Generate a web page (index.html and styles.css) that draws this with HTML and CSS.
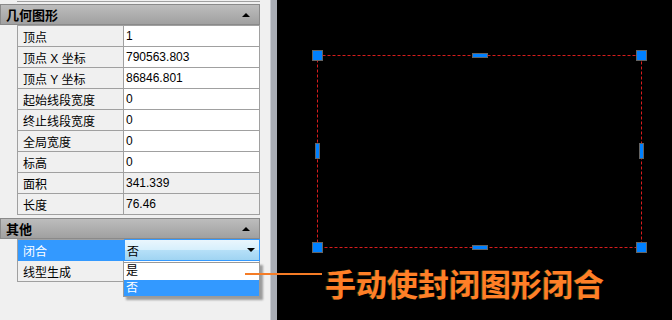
FILE: index.html
```html
<!DOCTYPE html>
<html>
<head>
  <meta charset="UTF-8">
  <link rel="stylesheet" href="styles.css">
  <title>特性</title>
</head>
<body>
  <div class="app">
    <div class="panel">
      <div class="prev-edge"></div>

      <div class="group">
        <div class="group-head"><span>几何图形</span><span class="tri-up"></span></div>
        <div class="props">
          <div class="row"><div class="key">顶点</div><div class="val">1</div></div>
          <div class="row"><div class="key">顶点 X 坐标</div><div class="val">790563.803</div></div>
          <div class="row"><div class="key">顶点 Y 坐标</div><div class="val">86846.801</div></div>
          <div class="row"><div class="key">起始线段宽度</div><div class="val">0</div></div>
          <div class="row"><div class="key">终止线段宽度</div><div class="val">0</div></div>
          <div class="row"><div class="key">全局宽度</div><div class="val">0</div></div>
          <div class="row"><div class="key">标高</div><div class="val">0</div></div>
          <div class="row"><div class="key">面积</div><div class="val readonly">341.339</div></div>
          <div class="row"><div class="key">长度</div><div class="val readonly">76.46</div></div>
        </div>
      </div>

      <div class="group group-other">
        <div class="group-head"><span>其他</span><span class="tri-up"></span></div>
        <div class="props">
          <div class="row selected">
            <div class="key">闭合</div>
            <div class="val combo"><span>否</span><span class="tri-down"></span></div>
          </div>
          <div class="row"><div class="key">线型生成</div><div class="val"></div></div>
        </div>
      </div>

      <!-- 下拉列表 -->
      <div class="dropdown">
        <div class="opt">是</div>
        <div class="opt active">否</div>
      </div>
    </div>

    <div class="splitter"></div>

    <div class="canvas">
      <svg width="395" height="320" viewBox="0 0 395 320">
        <rect x="40.5" y="55.5" width="324" height="192" fill="none" stroke="#d81c1c" stroke-width="1" stroke-dasharray="3 2"/>
        <g fill="#0080ff" stroke="#646464" stroke-width="1">
          <rect x="35.5" y="50.5" width="10" height="10"/>
          <rect x="359.5" y="50.5" width="10" height="10"/>
          <rect x="35.5" y="242.5" width="10" height="10"/>
          <rect x="359.5" y="242.5" width="10" height="10"/>
          <rect x="195.5" y="53.5" width="15" height="4"/>
          <rect x="195.5" y="245.5" width="15" height="4"/>
          <rect x="38.5" y="143.5" width="4" height="15"/>
          <rect x="362.5" y="143.5" width="4" height="15"/>
        </g>
      </svg>
    </div>

    <div class="note-line"></div>
    <div class="note">手动使封闭图形闭合</div>
  </div>
</body>
</html>
```

FILE: styles.css
```css
* {
  margin: 0;
  padding: 0;
  box-sizing: border-box;
}

body {
  width: 672px;
  height: 320px;
  overflow: hidden;
  background: #000;
  font-family: "Liberation Sans", "Noto Sans CJK SC", sans-serif;
  font-size: 12px;
  color: #000;
}

.app {
  position: relative;
  display: flex;
  height: 320px;
}

.panel {
  position: relative;
  width: 270px;
  height: 320px;
  background: #f0f0f0;
}

.prev-edge {
  width: 243px;
  height: 2px;
  margin-left: 17px;
  border-bottom: 1px solid #a0a0a0;
}

.group {
  margin-top: 2px;
}

.group-other {
  margin-top: 3px;
}

.group-head {
  display: flex;
  align-items: center;
  justify-content: space-between;
  width: 260px;
  height: 21px;
  padding: 0 9px 0 5px;
  background: linear-gradient(#bdbdbd, #a0a0a0);
  border: 1px solid #8a8a8a;
  font-family: "Noto Sans CJK SC", sans-serif;
  font-size: 13px;
  font-weight: bold;
}

.tri-up {
  width: 0;
  height: 0;
  border-left: 4px solid transparent;
  border-right: 4px solid transparent;
  border-bottom: 4px solid #000;
}

.tri-down {
  width: 0;
  height: 0;
  border-left: 4px solid transparent;
  border-right: 4px solid transparent;
  border-top: 4px solid #000;
}

.props {
  width: 243px;
  margin-left: 17px;
  border-left: 1px solid #a0a0a0;
  border-top: 1px solid #a0a0a0;
}

.row {
  display: flex;
  height: 21px;
}

.key,
.val {
  display: flex;
  align-items: center;
  border-right: 1px solid #a0a0a0;
  border-bottom: 1px solid #a0a0a0;
  white-space: nowrap;
}

.key {
  width: 106px;
  padding-left: 5px;
  background: #f0f0f0;
}

.val {
  width: 136px;
  padding-left: 2px;
  background: #fff;
}

.val.readonly {
  background: #f0f0f0;
}

.row.selected .key {
  background: #3399ff;
  color: #fff;
  border-right-color: #3399ff;
  border-bottom-color: #3399ff;
}

.val.combo {
  justify-content: space-between;
  margin-top: -1px;
  height: 22px;
  padding-right: 4px;
  border: 1px solid #3399ff;
  background: linear-gradient(#eaf6fd, #d6effc 50%, #b6e0f8 50%, #a0d4f2);
}

.dropdown {
  position: absolute;
  top: 262px;
  left: 123px;
  width: 137px;
  height: 35px;
  border: 1px solid #9a9a9a;
  background: #fff;
  box-shadow: 3px 3px 2px rgba(0, 0, 0, 0.35);
}

.opt {
  height: 17px;
  line-height: 17px;
  padding-left: 2px;
}

.opt.active {
  height: 16px;
  line-height: 16px;
  background: #3399ff;
  color: #fff;
}

.splitter {
  width: 7px;
  height: 320px;
  background: #a9adb5;
  border-left: 1px solid #c9ccd2;
}

.canvas {
  flex: 1;
  height: 320px;
  background: #000;
}

.canvas svg {
  display: block;
}

.note-line {
  position: absolute;
  top: 273px;
  left: 245px;
  width: 77px;
  height: 2px;
  background: #f57c26;
}

.note {
  position: absolute;
  top: 267px;
  left: 325px;
  font-family: "Noto Sans CJK SC", sans-serif;
  font-size: 31px;
  line-height: 31px;
  font-weight: bold;
  color: #ff7f27;
  text-shadow: -1px 0 0 #2a3a10;
  white-space: nowrap;
}
```
